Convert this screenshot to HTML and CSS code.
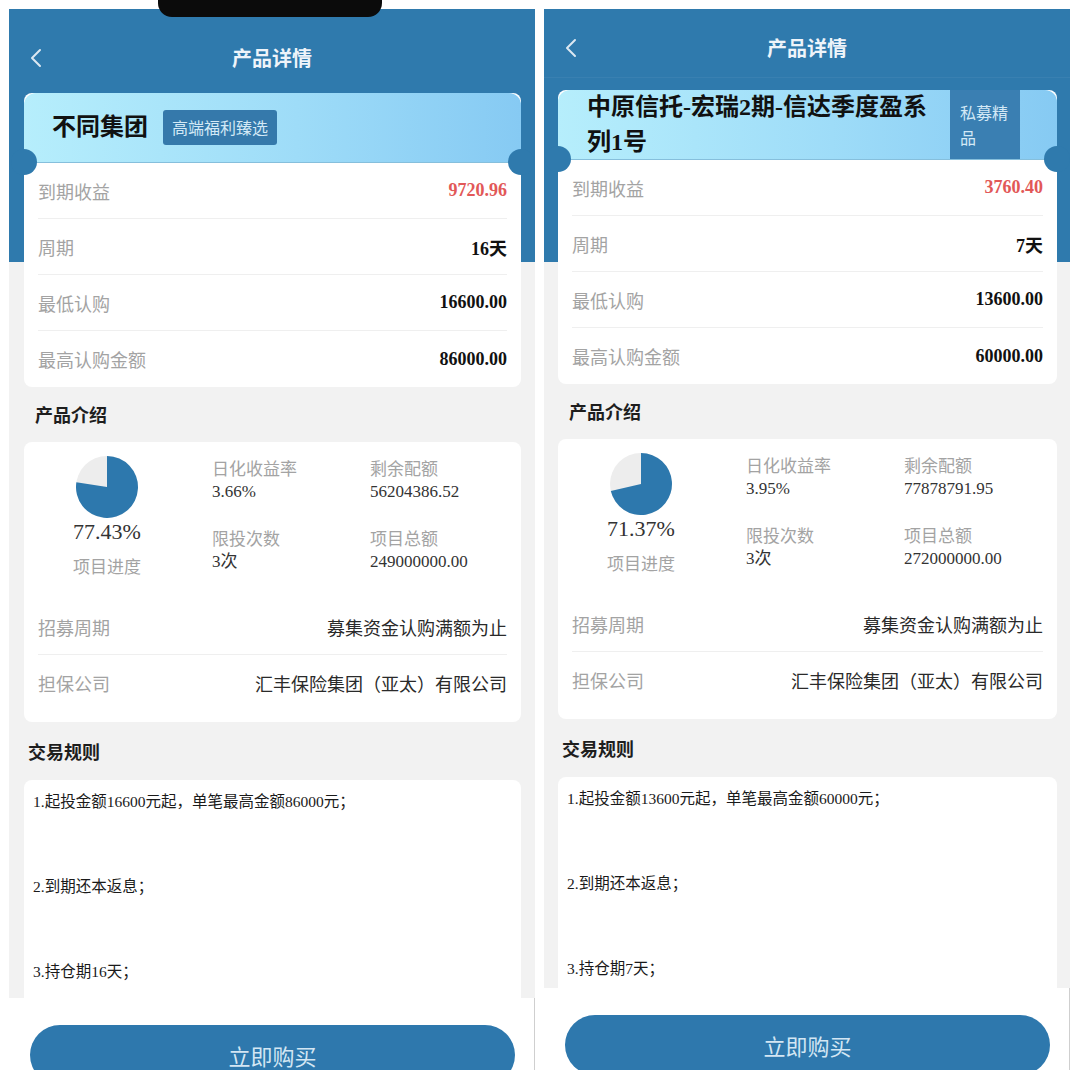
FILE: index.html
```html
<!DOCTYPE html>
<html lang="zh-CN">
<head>
<meta charset="utf-8">
<title>产品详情</title>
<link rel="stylesheet" href="styles.css">
</head>
<body>
<div class="stage">
  <div class="notch"></div>

  <section class="phone phone-a">
    <header class="nav">
      <svg class="back" viewBox="0 0 12 20" width="12" height="20"><path d="M10 2 L2 10 L10 18"/></svg>
      <h1 class="nav-title">产品详情</h1>
    </header>
    <main class="content">
      <div class="card summary">
        <div class="summary-head">
          <h2 class="product-name">不同集团</h2>
          <span class="tag">高端福利臻选</span>
        </div>
        <ul class="rows">
          <li class="row"><span class="label">到期收益</span><span class="num red">9720.96</span></li>
          <li class="row"><span class="label">周期</span><span class="num">16天</span></li>
          <li class="row"><span class="label">最低认购</span><span class="num">16600.00</span></li>
          <li class="row"><span class="label">最高认购金额</span><span class="num">86000.00</span></li>
        </ul>
      </div>

      <h3 class="section-title">产品介绍</h3>
      <div class="card intro">
        <div class="stats">
          <div class="progress">
            <svg class="pie" viewBox="0 0 62 62" width="62" height="62">
              <circle cx="31" cy="31" r="31" fill="#ededed"/>
              <path d="M31 31 L31 0 A31 31 0 1 1 0.36 26.28 Z" fill="#2d78ad"/>
            </svg>
            <div class="pct">77.43%</div>
            <div class="pct-label">项目进度</div>
          </div>
          <div class="stat-grid">
            <div class="stat"><div class="stat-label">日化收益率</div><div class="stat-value">3.66%</div></div>
            <div class="stat"><div class="stat-label">剩余配额</div><div class="stat-value">56204386.52</div></div>
            <div class="stat"><div class="stat-label">限投次数</div><div class="stat-value">3次</div></div>
            <div class="stat"><div class="stat-label">项目总额</div><div class="stat-value">249000000.00</div></div>
          </div>
        </div>
        <ul class="rows rows-info">
          <li class="row"><span class="label">招募周期</span><span class="text">募集资金认购满额为止</span></li>
          <li class="row"><span class="label">担保公司</span><span class="text">汇丰保险集团（亚太）有限公司</span></li>
        </ul>
      </div>

      <h3 class="section-title section-title-rules">交易规则</h3>
      <div class="card rules">
        <p>1.起投金额16600元起，单笔最高金额86000元；</p>
        <p>2.到期还本返息；</p>
        <p>3.持仓期16天；</p>
      </div>
    </main>
    <footer class="footer"><button class="buy">立即购买</button></footer>
  </section>

  <section class="phone phone-b">
    <header class="nav">
      <svg class="back" viewBox="0 0 12 20" width="12" height="20"><path d="M10 2 L2 10 L10 18"/></svg>
      <h1 class="nav-title">产品详情</h1>
    </header>
    <main class="content">
      <div class="card summary">
        <div class="summary-head">
          <h2 class="product-name product-name-long">中原信托-宏瑞2期-信达季度盈系列1号</h2>
          <span class="tag tag-tall">私募精品</span>
        </div>
        <ul class="rows">
          <li class="row"><span class="label">到期收益</span><span class="num red">3760.40</span></li>
          <li class="row"><span class="label">周期</span><span class="num">7天</span></li>
          <li class="row"><span class="label">最低认购</span><span class="num">13600.00</span></li>
          <li class="row"><span class="label">最高认购金额</span><span class="num">60000.00</span></li>
        </ul>
      </div>

      <h3 class="section-title">产品介绍</h3>
      <div class="card intro">
        <div class="stats">
          <div class="progress">
            <svg class="pie" viewBox="0 0 62 62" width="62" height="62">
              <circle cx="31" cy="31" r="31" fill="#ededed"/>
              <path d="M31 31 L31 0 A31 31 0 1 1 0.80 38.01 Z" fill="#2d78ad"/>
            </svg>
            <div class="pct">71.37%</div>
            <div class="pct-label">项目进度</div>
          </div>
          <div class="stat-grid">
            <div class="stat"><div class="stat-label">日化收益率</div><div class="stat-value">3.95%</div></div>
            <div class="stat"><div class="stat-label">剩余配额</div><div class="stat-value">77878791.95</div></div>
            <div class="stat"><div class="stat-label">限投次数</div><div class="stat-value">3次</div></div>
            <div class="stat"><div class="stat-label">项目总额</div><div class="stat-value">272000000.00</div></div>
          </div>
        </div>
        <ul class="rows rows-info">
          <li class="row"><span class="label">招募周期</span><span class="text">募集资金认购满额为止</span></li>
          <li class="row"><span class="label">担保公司</span><span class="text">汇丰保险集团（亚太）有限公司</span></li>
        </ul>
      </div>

      <h3 class="section-title section-title-rules">交易规则</h3>
      <div class="card rules">
        <p>1.起投金额13600元起，单笔最高金额60000元；</p>
        <p>2.到期还本返息；</p>
        <p>3.持仓期7天；</p>
      </div>
    </main>
    <footer class="footer"><button class="buy">立即购买</button></footer>
  </section>
</div>
</body>
</html>
```

FILE: styles.css
```css
* { box-sizing: border-box; }

html, body {
  margin: 0;
  padding: 0;
  background: #ffffff;
}

body {
  font-family: "Noto Sans CJK SC", "Noto Sans", sans-serif;
  color: #222;
}

.stage {
  position: relative;
  width: 1080px;
  height: 1080px;
  padding: 9px 0 0 9px;
  display: flex;
  gap: 9px;
  align-items: flex-start;
  overflow: hidden;
}

.notch {
  position: absolute;
  left: 158px;
  top: 0;
  width: 224px;
  height: 17px;
  background: #0b0b0b;
  border-radius: 0 0 14px 14px;
  z-index: 5;
}

.phone {
  width: 526px;
  height: 1061px;
  display: flex;
  flex-direction: column;
  overflow: hidden;
  background: linear-gradient(to bottom, #2f7aad 0, #2f7aad 253px, #f2f2f2 253px);
}

/* nav bar */
.nav {
  flex: none;
  display: grid;
  grid-template-columns: 60px 1fr 60px;
  align-items: center;
}
.phone-a .nav { height: 84px; padding-top: 14px; }
.phone-b .nav { height: 69px; padding-top: 9px; border-bottom: 1px solid rgba(255, 255, 255, 0.05); }

.back {
  margin-left: 21px;
  fill: none;
  stroke: #dce8f2;
  stroke-width: 2;
  stroke-linecap: round;
  stroke-linejoin: round;
}

.nav-title {
  margin: 0;
  text-align: center;
  font-size: 20px;
  font-weight: 700;
  color: #eef4fa;
  line-height: 28px;
}

/* content */
.content {
  flex: none;
  overflow: hidden;
}
.phone-a .content { height: 905px; padding: 0 14px 0 15px; }
.phone-b .content { height: 910px; padding: 12px 13px 0 14px; }

.card {
  background: #ffffff;
  border-radius: 8px;
}

.summary-head {
  position: relative;
  height: 70px;
  display: flex;
  align-items: center;
  gap: 15px;
  padding-left: 28px;
  border-radius: 12px 12px 0 0;
  background: linear-gradient(90deg, #b6eefc 0%, #9edcf8 55%, #86caf3 100%);
  border-bottom: 1px solid #86bfdc;
}
.summary-head::before,
.summary-head::after {
  content: "";
  position: absolute;
  top: 56px;
  width: 26px;
  height: 26px;
  border-radius: 50%;
  background: #2f7aad;
  z-index: 2;
}
.summary-head::before { left: -13px; }
.summary-head::after { right: -13px; }

.phone-b .summary-head {
  align-items: stretch;
  gap: 0;
  padding-left: 29px;
}

.product-name {
  margin: 0;
  font-family: "Liberation Serif", "Noto Sans CJK SC", serif;
  font-size: 24px;
  font-weight: 700;
  color: #111;
  line-height: 35px;
}
.product-name-long {
  flex: 1;
  min-width: 0;
  padding-right: 8px;
  align-self: center;
}

.tag {
  height: 35px;
  line-height: 35px;
  padding: 0 9px;
  background: #3579ab;
  border-radius: 3px;
  color: #d3e9f6;
  font-size: 16px;
}
.tag-tall {
  flex: none;
  width: 70px;
  height: auto;
  display: flex;
  align-items: center;
  line-height: 25px;
  padding: 0 10px;
  margin-right: 37px;
  border-radius: 0;
  background: #3a7fb2;
}

.rows {
  list-style: none;
  margin: 0;
  padding: 0 14px;
}
.row {
  height: 56px;
  display: flex;
  justify-content: space-between;
  align-items: center;
  border-bottom: 1px solid #efefef;
}
.row:last-child { border-bottom: none; }

.label {
  font-size: 18px;
  color: #a3a3a3;
}
.num {
  font-family: "Liberation Serif", "Noto Sans CJK SC", serif;
  font-weight: 700;
  font-size: 18px;
  color: #111;
}
.num.red { color: #e25858; }

.section-title {
  margin: 0;
  height: 55px;
  line-height: 55px;
  padding-left: 11px;
  font-size: 18px;
  font-weight: 700;
  color: #1e1e1e;
}
.section-title-rules {
  height: 58px;
  line-height: 58px;
  padding-left: 4px;
}

/* intro */
.intro {
  padding-bottom: 12px;
}
.stats {
  height: 158px;
  padding-top: 14px;
  display: flex;
}
.progress {
  width: 166px;
  display: flex;
  flex-direction: column;
  align-items: center;
}
.pie { display: block; }
.pct {
  font-family: "Liberation Serif", serif;
  font-size: 22px;
  line-height: 28px;
  color: #333;
}
.pct-label {
  margin-top: 8px;
  font-size: 17px;
  line-height: 24px;
  color: #a3a3a3;
}
.stat-grid {
  margin-left: 22px;
  display: grid;
  grid-template-columns: 158px 1fr;
  grid-auto-rows: 48px;
  row-gap: 22px;
}
.stat-label {
  font-size: 17px;
  line-height: 24px;
  color: #a3a3a3;
}
.stat-value {
  font-family: "Liberation Serif", "Noto Sans CJK SC", serif;
  font-size: 17px;
  line-height: 24px;
  color: #333;
}
.rows-info .row { height: 55px; }
.text {
  font-size: 18px;
  color: #2a2a2a;
}

/* rules */
.rules {
  min-height: 320px;
  border-radius: 8px 8px 0 0;
  padding: 10px 10px 0 9px;
}
.rules p {
  margin: 0 0 61px;
  font-family: "Liberation Serif", "Noto Sans CJK SC", serif;
  font-size: 15.5px;
  line-height: 24px;
  color: #1a1a1a;
}

/* footer */
.footer {
  flex: 1;
  background: #ffffff;
  padding: 27px 20px 0 21px;
  box-shadow: inset -1px 0 0 #cfcfcf;
}
.buy {
  display: block;
  width: 100%;
  height: 60px;
  border: none;
  border-radius: 30px;
  background: #2e78ad;
  color: #d3e6f3;
  font-family: "Noto Sans CJK SC", sans-serif;
  font-size: 22px;
  padding: 0;
}
```
